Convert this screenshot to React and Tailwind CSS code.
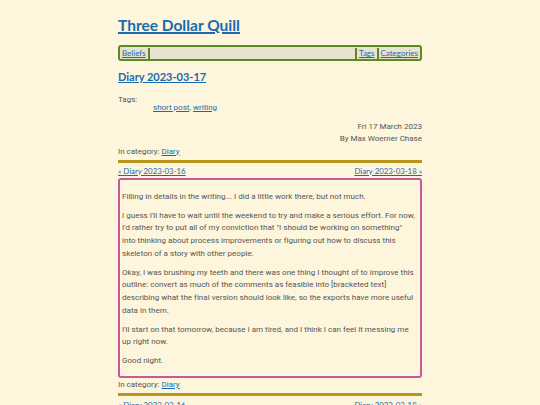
const heading = { fontFamily: 'Lato, "Open Sans", sans-serif' }

const paragraphs = [
  ['Filling in details in the writing... I did a little work there, but not much.'],
  [
    "I guess I'll have to wait until the weekend to try and make a serious effort. For now,",
    'I\'d rather try to put all of my conviction that "I should be working on something"',
    'into thinking about process improvements or figuring out how to discuss this',
    'skeleton of a story with other people.',
  ],
  [
    'Okay, I was brushing my teeth and there was one thing I thought of to improve this',
    'outline: convert as much of the comments as feasible into [bracketed text]',
    'describing what the final version should look like, so the exports have more useful',
    'data in them.',
  ],
  [
    "I'll start on that tomorrow, because I am tired, and I think I can feel it messing me",
    'up right now.',
  ],
  ['Good night.'],
]

function NavSep() {
  return <span className="mx-[2px] inline-block h-[11px] w-[2px] bg-[#5b8a22]" />
}

function PostNav() {
  return (
    <div className="flex justify-between text-[7.8px] leading-[13px]" style={heading}>
      <a href="#" className="text-[#1a6ab0] underline">
        « Diary 2023-03-16
      </a>
      <a href="#" className="text-[#1a6ab0] underline">
        Diary 2023-03-18 »
      </a>
    </div>
  )
}

function Category() {
  return (
    <div className="text-[8px] leading-[13px]">
      In category: <a href="#" className="text-[#1a6ab0] underline">Diary</a>
    </div>
  )
}

export default function App() {
  return (
    <div
      className="min-h-screen bg-[#fdf5dc] text-[#555555]"
      style={{ fontFamily: 'Roboto, "Liberation Sans", sans-serif' }}
    >
      <div className="mx-auto w-[304px] pt-[14px]">
        <h1 className="text-[15.5px] font-bold leading-[22px]" style={heading}>
          <a href="#" className="text-[#1a6ab0] underline decoration-[1.5px]">
            Three Dollar Quill
          </a>
        </h1>

        <nav
          className="mt-[9px] flex h-[16px] items-center rounded-[3px] border-2 border-[#5b8a22] bg-[#e8e3cf] px-[2px] text-[8px]"
          style={heading}
        >
          <a href="#" className="text-[#1a6ab0] underline">Beliefs</a>
          <NavSep />
          <div className="flex-1" />
          <NavSep />
          <a href="#" className="text-[#1a6ab0] underline">Tags</a>
          <NavSep />
          <a href="#" className="text-[#1a6ab0] underline">Categories</a>
        </nav>

        <h2 className="mt-[8px] text-[11px] font-bold leading-[16px]" style={heading}>
          <a href="#" className="text-[#1a6ab0] underline">Diary 2023-03-17</a>
        </h2>

        <div className="mt-[7.5px] text-[8px] leading-[13px]">
          <div>Tags:</div>
          <div className="-mt-[5px] pl-[35px]">
            <a href="#" className="text-[#1a6ab0] underline">short post</a>,{' '}
            <a href="#" className="text-[#1a6ab0] underline">writing</a>
          </div>
        </div>

        <div className="mt-[7px] text-right text-[8px] leading-[12px]">
          <div>Fri 17 March 2023</div>
          <div>By Max Woerner Chase</div>
        </div>

        <Category />

        <div className="mt-[2px] mb-[2px] h-[3px] bg-[#b8961c]" />

        <PostNav />

        <article className="rounded-[3px] border-2 border-[#c9589a] px-[2px] pt-[11px] pb-[8px] text-[8px] leading-[12.7px] tracking-[0.02px]">
          <div className="flex flex-col gap-[6.3px]">
            {paragraphs.map((lines, i) => (
              <p key={i} className="whitespace-nowrap">
                {lines.map((l, j) => (
                  <span key={j}>
                    {l}
                    {j < lines.length - 1 ? <br /> : null}
                  </span>
                ))}
              </p>
            ))}
          </div>
        </article>

        <Category />

        <div className="mt-[2px] mb-[2.5px] h-[3px] bg-[#b8961c]" />

        <PostNav />
      </div>
    </div>
  )
}
